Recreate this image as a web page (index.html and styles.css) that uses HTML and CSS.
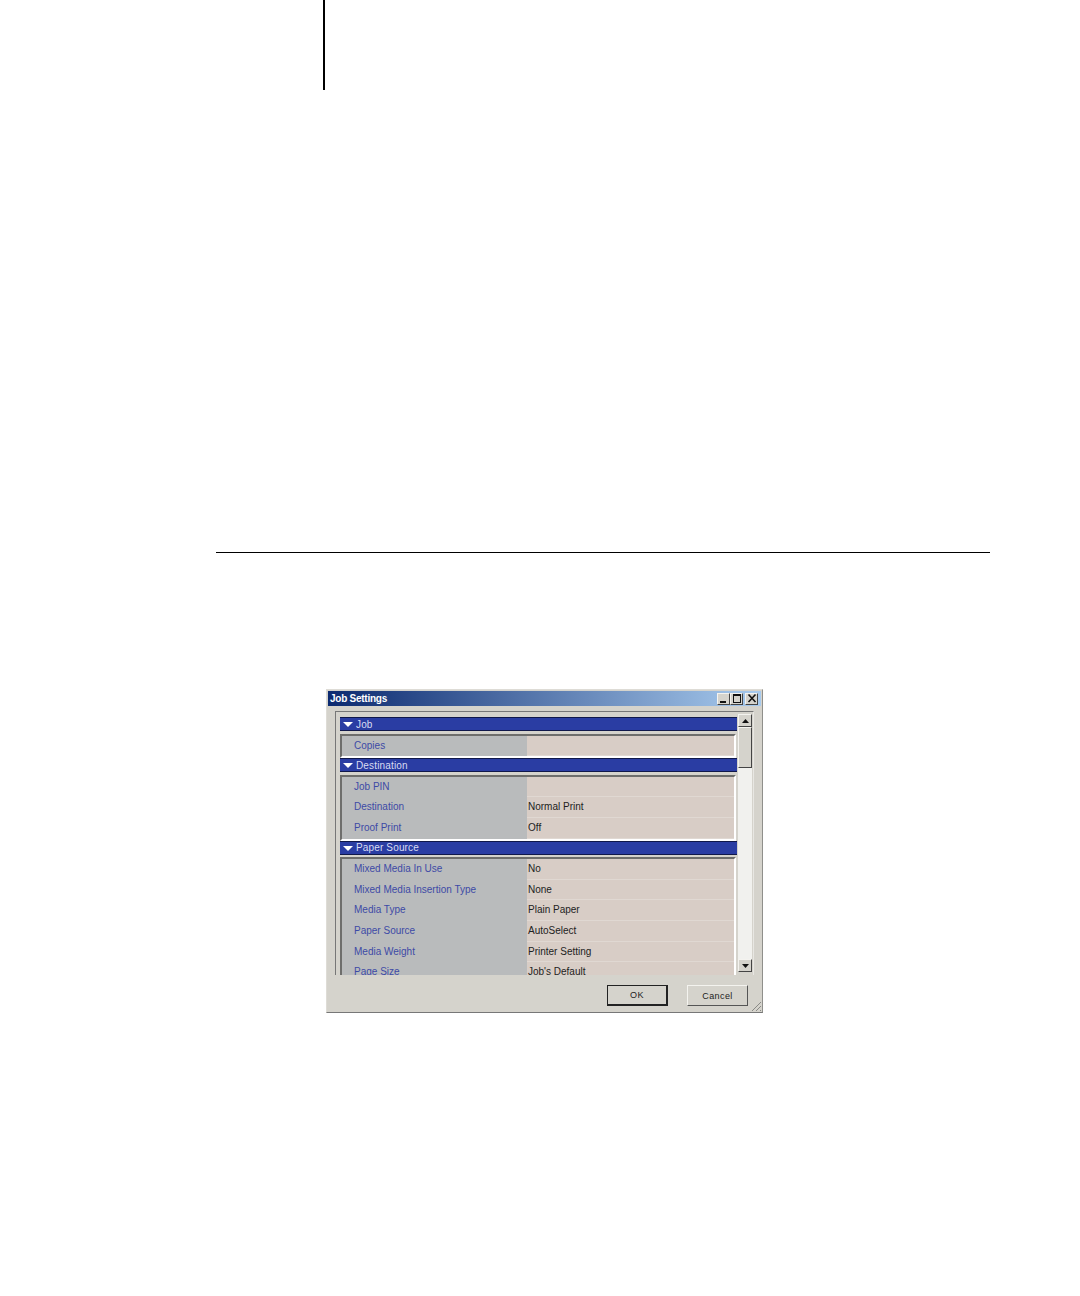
FILE: index.html
```html
<!DOCTYPE html>
<html lang="en">
<head>
    <meta charset="UTF-8">
    <title>Job Settings</title>
    <link rel="stylesheet" href="styles.css">
</head>
<body>
    <div class="crop-mark"></div>
    <div class="rule"></div>

    <div class="dialog">
        <div class="titlebar">
            <span class="title">Job Settings</span>
            <div class="win-buttons">
                <div class="win-btn"><svg width="12" height="11" viewBox="0 0 12 11"><path d="M2 8h6v2H2z" fill="#111"/></svg></div>
                <div class="win-btn"><svg width="12" height="11" viewBox="0 0 12 11"><path d="M2 1h8v9H2z M3 3v6h6V3z" fill="#111" fill-rule="evenodd"/></svg></div>
                <div class="win-btn win-close"><svg width="12" height="11" viewBox="0 0 12 11"><path d="M2.5 1.5l7 7.5M9.5 1.5l-7 7.5" stroke="#111" stroke-width="1.6" fill="none"/></svg></div>
            </div>
        </div>

        <div class="panel">
            <div class="sheet">
                <div class="section-bar"><svg class="arrow" width="10" height="5" viewBox="0 0 10 5"><path d="M0 0h10L5 5z" fill="#fff"/></svg><span>Job</span></div>
                <div class="section-body">
                    <div class="row"><div class="label">Copies</div><div class="value"></div></div>
                </div>
                <div class="section-bar"><svg class="arrow" width="10" height="5" viewBox="0 0 10 5"><path d="M0 0h10L5 5z" fill="#fff"/></svg><span>Destination</span></div>
                <div class="section-body">
                    <div class="row"><div class="label">Job PIN</div><div class="value"></div></div>
                    <div class="row"><div class="label">Destination</div><div class="value">Normal Print</div></div>
                    <div class="row"><div class="label">Proof Print</div><div class="value">Off</div></div>
                </div>
                <div class="section-bar"><svg class="arrow" width="10" height="5" viewBox="0 0 10 5"><path d="M0 0h10L5 5z" fill="#fff"/></svg><span>Paper Source</span></div>
                <div class="section-body">
                    <div class="row"><div class="label">Mixed Media In Use</div><div class="value">No</div></div>
                    <div class="row"><div class="label">Mixed Media Insertion Type</div><div class="value">None</div></div>
                    <div class="row"><div class="label">Media Type</div><div class="value">Plain Paper</div></div>
                    <div class="row"><div class="label">Paper Source</div><div class="value">AutoSelect</div></div>
                    <div class="row"><div class="label">Media Weight</div><div class="value">Printer Setting</div></div>
                    <div class="row"><div class="label">Page Size</div><div class="value">Job's Default</div></div>
                </div>
            </div>
            <div class="scrollbar">
                <div class="scroll-btn"><svg width="7" height="4" viewBox="0 0 7 4"><path d="M3.5 0L7 4H0z" fill="#111"/></svg></div>
                <div class="scroll-thumb"></div>
                <div class="scroll-track"></div>
                <div class="scroll-btn"><svg width="7" height="4" viewBox="0 0 7 4"><path d="M0 0h7L3.5 4z" fill="#111"/></svg></div>
            </div>
        </div>

        <div class="actions">
            <button class="btn btn-default">OK</button>
            <button class="btn">Cancel</button>
        </div>
        <svg class="grip" width="11" height="11" viewBox="0 0 11 11"><path d="M1 10l9-9M5 10l5-5M9 10l1-1" stroke="#8a8a86" stroke-width="1" fill="none"/></svg>
    </div>
</body>
</html>
```

FILE: styles.css
```css
body {
    margin: 0;
    height: 1296px;
    overflow: hidden;
    background: #fff;
    font-family: "Liberation Sans", Arial, sans-serif;
}

.crop-mark {
    width: 2px;
    height: 90px;
    margin-left: 323px;
    background: #000;
}

.rule {
    width: 774px;
    height: 1px;
    margin: 462px 0 0 216px;
    background: #000;
}

.dialog {
    position: relative;
    box-sizing: border-box;
    width: 437px;
    height: 324px;
    margin: 136px 0 0 326px;
    padding: 1px 1px 0;
    background: #d5d3cc;
    border: 1px solid #dedcd6;
    border-right-color: #8f8f8b;
    border-bottom-color: #777;
}

.titlebar {
    display: flex;
    align-items: center;
    justify-content: space-between;
    height: 15px;
    padding: 0 3px 0 2px;
    background: linear-gradient(to right, #0c2a70, #a8cbee);
}

.title {
    color: #fff;
    font-size: 10px;
    font-weight: bold;
    letter-spacing: -0.25px;
}

.win-buttons {
    display: flex;
}

.win-btn {
    box-sizing: border-box;
    display: flex;
    width: 13px;
    height: 12px;
    background: #d5d3cc;
    border: 1px solid;
    border-color: #f4f3ef #444 #444 #f4f3ef;
    align-items: center;
    justify-content: center;
}

.win-btn svg {
    flex: none;
}

.win-close {
    margin-left: 2px;
}

.panel {
    display: flex;
    box-sizing: border-box;
    width: 419px;
    height: 264px;
    margin: 5px 0 0 7px;
    padding: 5px 0 0 4px;
    background: #d5d3cc;
    border: 1px solid #777;
    border-bottom: 0;
    border-right-color: #e8e7e3;
    overflow: hidden;
}

.sheet {
    width: 397px;
    flex: none;
}

.section-bar {
    display: flex;
    align-items: center;
    box-sizing: border-box;
    height: 14px;
    background: #2a3da3;
    border-top: 1px solid #10184a;
    border-bottom: 1px solid #10184a;
    color: #d9dcf2;
    font-size: 10px;
    letter-spacing: 0.15px;
}

.arrow {
    margin: 1px 3px 0 3px;
}

.section-body {
    margin: 2.6px 1px 0 0;
    border: 2px solid;
    border-color: #6e6e6c #fff #fff #6e6e6c;
}

.row {
    display: flex;
    height: 20.6px;
    font-size: 10px;
    line-height: 20px;
}

.label {
    width: 185px;
    padding-left: 12px;
    box-sizing: border-box;
    flex: none;
    background: #b9bbbc;
    color: #3d4aa6;
}

.value {
    flex: 1;
    padding-left: 1px;
    background: #d8cdc6;
    color: #222;
    border-bottom: 1px solid #e0d8d2;
}

.scrollbar {
    display: flex;
    flex-direction: column;
    width: 14px;
    margin: -3px 0 0 1px;
    height: 258px;
    flex: none;
}

.scroll-btn {
    box-sizing: border-box;
    display: flex;
    align-items: center;
    justify-content: center;
    height: 13px;
    background: #d5d3cc;
    border: 1px solid;
    border-color: #f4f3ef #444 #444 #f4f3ef;
}

.scroll-thumb {
    box-sizing: border-box;
    height: 41px;
    background: #d5d3cc;
    border: 1px solid;
    border-color: #f4f3ef #444 #444 #f4f3ef;
}

.scroll-track {
    flex: 1;
    background: #f1f1ee;
}

.actions {
    display: flex;
    justify-content: flex-end;
    gap: 19px;
    padding: 10px 13px 0 0;
}

.btn {
    box-sizing: border-box;
    width: 61px;
    height: 21px;
    padding: 0;
    background: #d5d3cc;
    border: 1px solid;
    border-color: #f4f3ef #555 #555 #f4f3ef;
    color: #222;
    font-family: "Liberation Sans", Arial, sans-serif;
    font-size: 9px;
    letter-spacing: 0.4px;
}

.btn-default {
    border: 1px solid #222;
    border-bottom-width: 2px;
    border-right-width: 2px;
}

.grip {
    position: absolute;
    right: 0;
    bottom: 0;
}
```
